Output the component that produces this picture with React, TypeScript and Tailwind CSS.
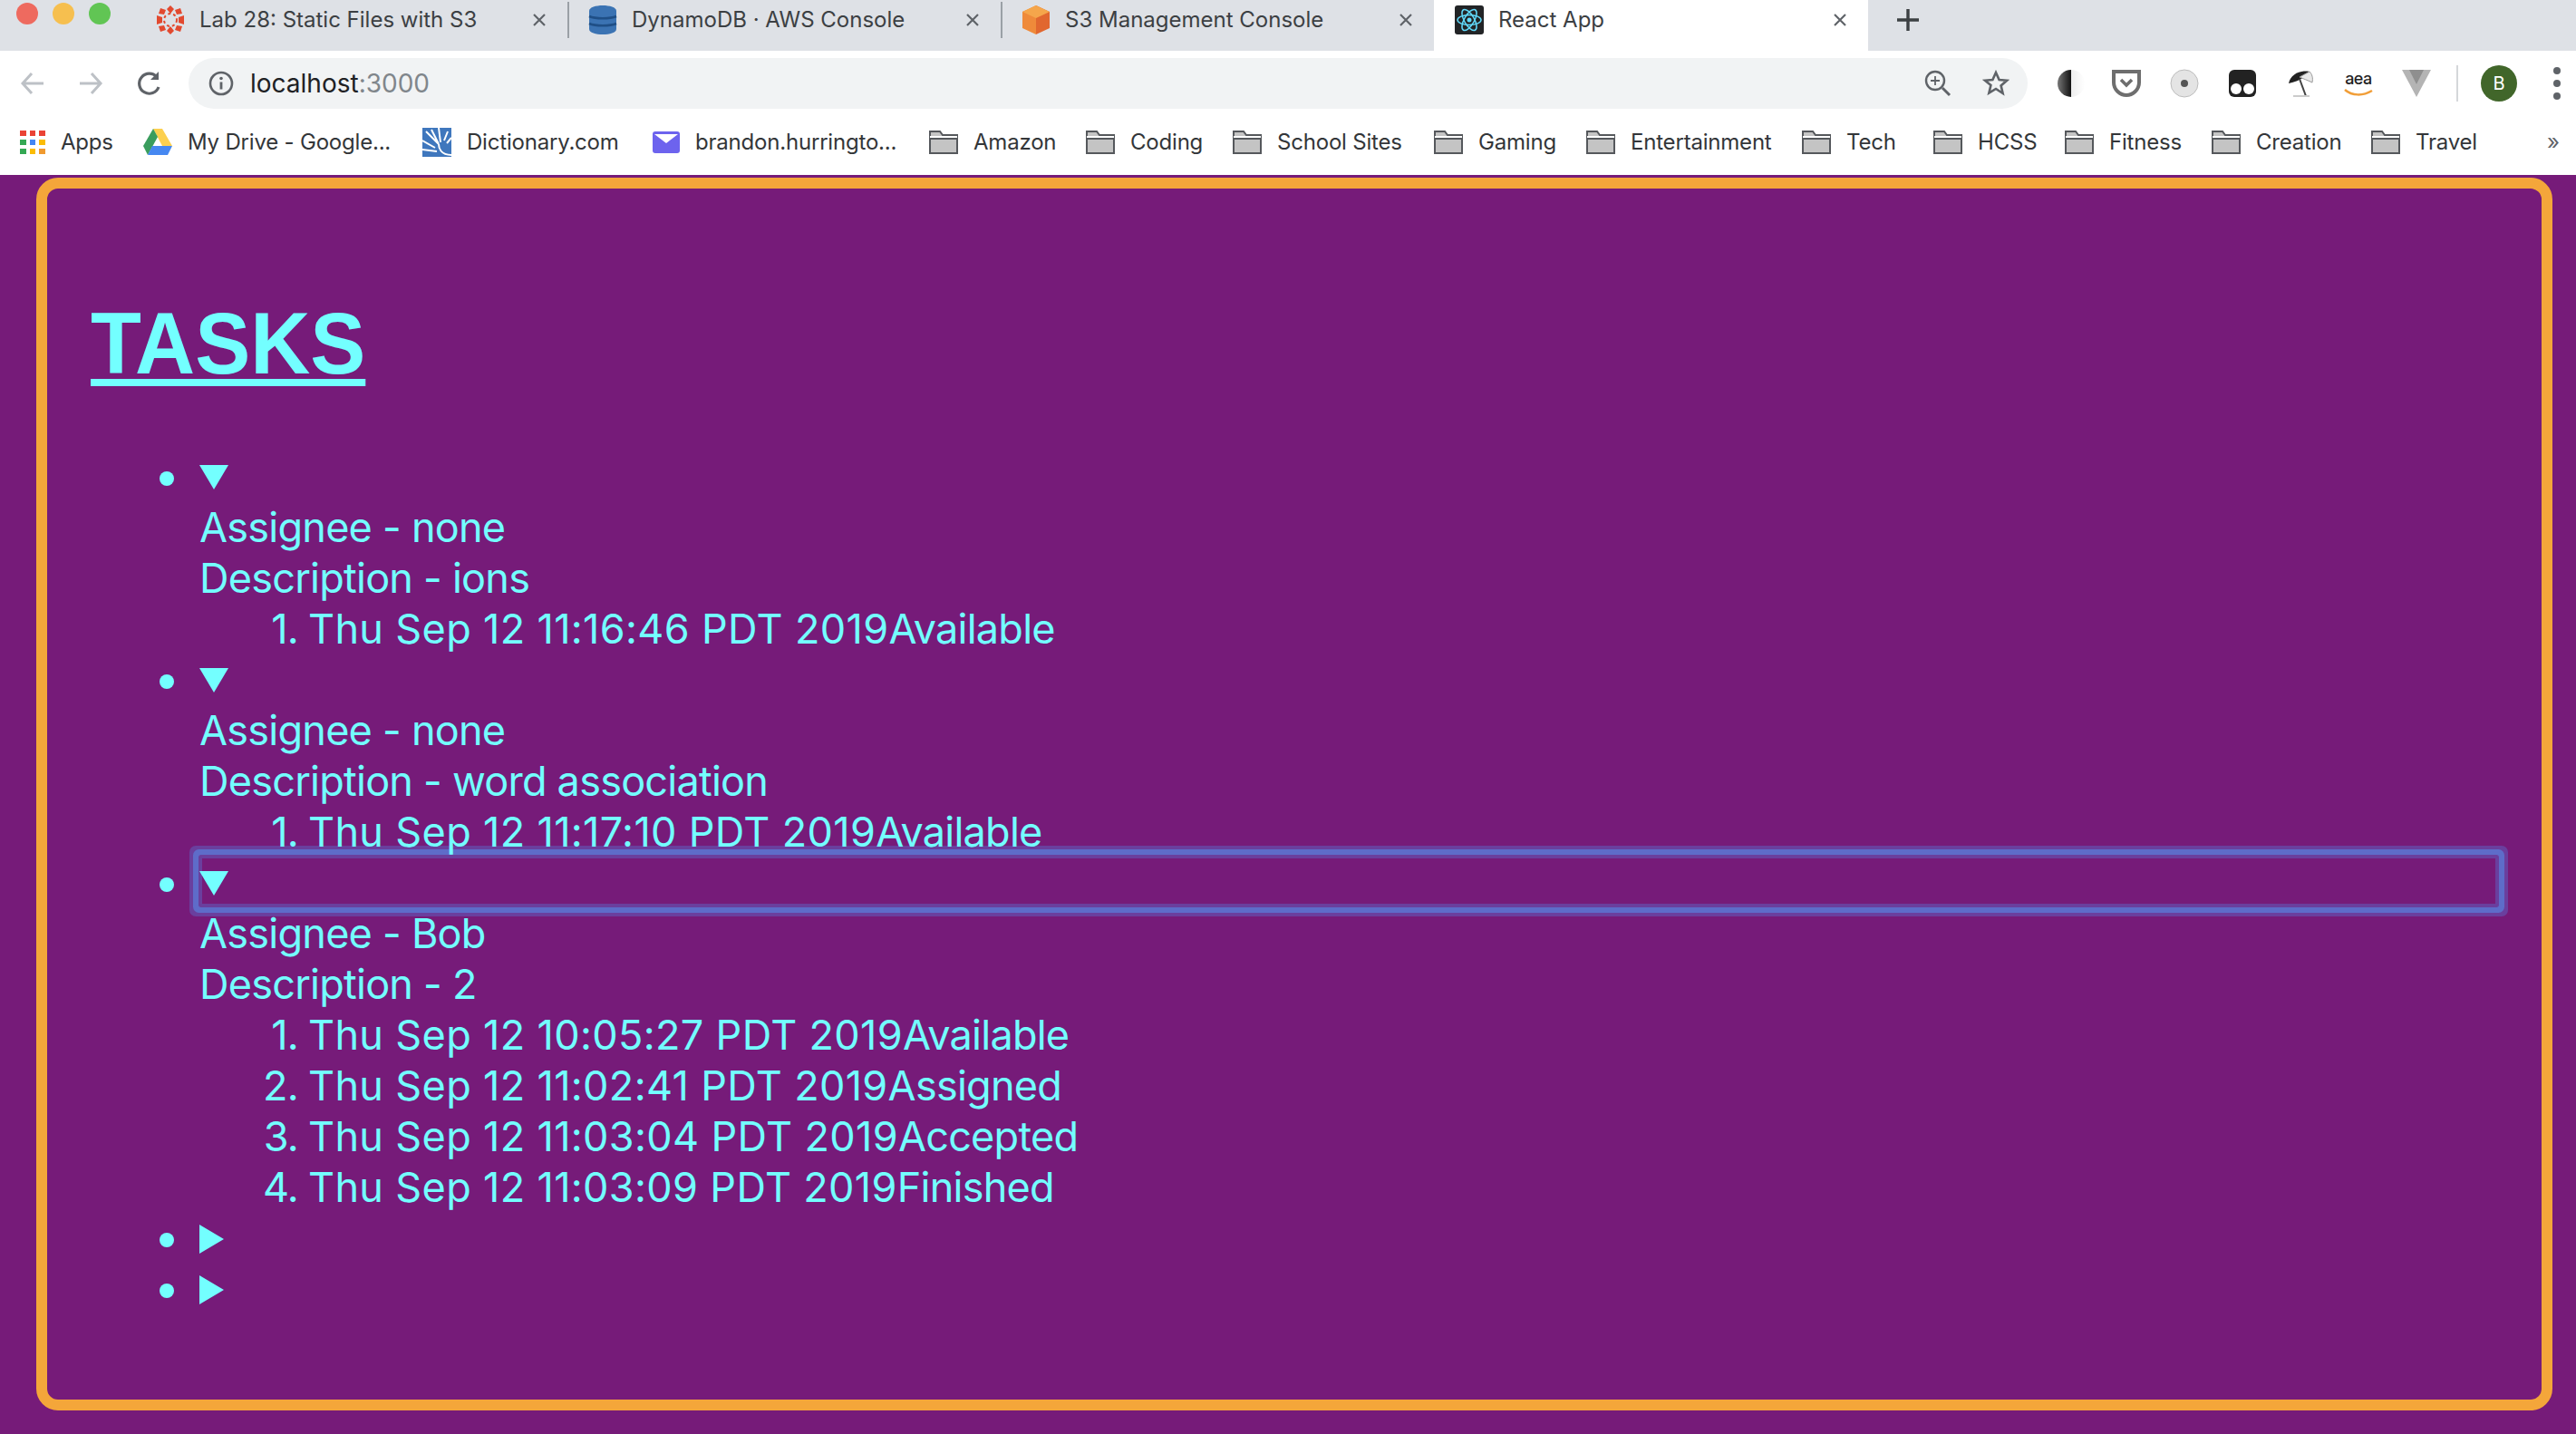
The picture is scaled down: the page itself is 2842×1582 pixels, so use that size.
import type { ReactNode } from "react";

function Close() {
  return (
    <svg width="14" height="14" viewBox="0 0 14 14" className="shrink-0">
      <path d="M1 1l12 12M13 1L1 13" stroke="#5f6368" strokeWidth="2.2" />
    </svg>
  );
}

function CanvasIcon() {
  return (
    <svg width="32" height="32" viewBox="0 0 32 32">
      <circle cx="16" cy="16" r="7" fill="none" stroke="#e2492f" strokeWidth="2" strokeDasharray="3 3" />
      <path d="M16 0l4 4-4 5-4-5zM16 32l4-4-4-5-4 5zM1 11l6 2 0 6-6 2zM31 11l-6 2 0 6 6 2zM5 3l6 2-2 5-6-1zM27 3l-6 2 2 5 6-1zM5 29l6-2-2-5-6 1zM27 29l-6-2 2-5 6 1z" fill="#e2492f" />
    </svg>
  );
}

function DynamoIcon() {
  return (
    <svg width="32" height="32" viewBox="0 0 32 32">
      <path d="M1 6c0-8 30-8 30 0v20c0 8-30 8-30 0z" fill="#3b73b3" />
      <path d="M1 12c7 3 23 3 30 0M1 20c7 3 23 3 30 0" stroke="#1f4f86" strokeWidth="2.5" fill="none" />
    </svg>
  );
}

function BucketIcon() {
  return (
    <svg width="32" height="32" viewBox="0 0 32 32">
      <path d="M16 0l15 7v18l-15 7z" fill="#e1672f" />
      <path d="M16 0L1 7v18l15 7z" fill="#ef8a3a" />
      <path d="M16 0l15 7-15 7L1 7z" fill="#f5a64b" />
    </svg>
  );
}

function ReactIcon() {
  return (
    <svg width="32" height="32" viewBox="0 0 32 32">
      <rect width="32" height="32" rx="3" fill="#222426" />
      <g fill="none" stroke="#61dafb" strokeWidth="1.5">
        <ellipse cx="16" cy="16" rx="13" ry="5.5" />
        <ellipse cx="16" cy="16" rx="13" ry="5.5" transform="rotate(60 16 16)" />
        <ellipse cx="16" cy="16" rx="13" ry="5.5" transform="rotate(120 16 16)" />
      </g>
      <circle cx="16" cy="16" r="2.5" fill="#61dafb" />
    </svg>
  );
}

function Tab({ icon, title, className, active }: { icon: ReactNode; title: string; className: string; active?: boolean }) {
  return (
    <div className={`flex h-full items-center pb-[12px] ${className} ${active ? "bg-white" : ""}`}>
      <span className="flex w-[48px] shrink-0">{icon}</span>
      <span className="flex-1 truncate text-[24px] text-[#3c4043]">{title}</span>
      <Close />
      <span className="w-[24px]" />
    </div>
  );
}

function Sep() {
  return <span className="mb-[12px] h-[40px] w-[2px] shrink-0 bg-[#9aa0a6]" />;
}

function Folder() {
  return (
    <svg width="32" height="26" viewBox="0 0 32 26" className="shrink-0">
      <path d="M1 25V1h11l3 4h16v20z" fill="#c4c4c4" stroke="#55585c" strokeWidth="2" />
      <path d="M1 6h30v3H1z" fill="#fff" />
      <path d="M1 9h30" stroke="#55585c" strokeWidth="2" />
    </svg>
  );
}

function AppsIcon() {
  const colors = ["#ea4335", "#ea4335", "#ea4335", "#34a853", "#4285f4", "#fbbc05", "#34a853", "#fbbc05", "#f09a2f"];
  return (
    <span className="grid h-[26px] w-[28px] shrink-0 grid-cols-3 gap-x-[4px] gap-y-[4px]">
      {colors.map((c, i) => (
        <span key={i} style={{ backgroundColor: c }} />
      ))}
    </span>
  );
}

function DriveIcon() {
  return (
    <svg width="32" height="29" viewBox="0 0 32 29" className="shrink-0">
      <path d="M11 0h10l11 19H21z" fill="#fcd04f" />
      <path d="M11 0l5 9-11 20-5-10z" fill="#3a9d5d" />
      <path d="M10 19h22l-5 10H5z" fill="#4688f1" />
    </svg>
  );
}

function DictIcon() {
  return (
    <svg width="32" height="32" viewBox="0 0 32 32" className="shrink-0">
      <rect width="32" height="32" fill="#3f77bd" />
      <path d="M32 30C20 30 18 22 18 18M18 18L4 4M18 18L10 2M20 16L18 0M14 22L0 14M16 26L0 24M24 14l4-10M27 17l5-6" stroke="#fff" strokeWidth="2" fill="none" />
    </svg>
  );
}

function MailIcon() {
  return (
    <svg width="30" height="24" viewBox="0 0 30 24" className="shrink-0">
      <rect width="30" height="24" rx="3" fill="#6d63ee" />
      <path d="M2 3h26L15 13z" fill="#fff" />
    </svg>
  );
}

function Bookmark({ icon, label, className }: { icon: ReactNode; label: string; className: string }) {
  return (
    <div className={`flex h-full shrink-0 items-center ${className}`}>
      {icon}
      <span className="whitespace-nowrap pl-[17px] text-[24px] tracking-[-0.2px] text-[#333639]">{label}</span>
    </div>
  );
}

function ExtensionIcons() {
  return (
    <div className="flex items-center">
      <span className="flex w-[64px] justify-center">
        <svg width="32" height="32" viewBox="0 0 32 32" className="ml-[5px]">
          <defs>
            <linearGradient id="half" x1="0" x2="1" y1="0" y2="0">
              <stop offset="0" stopColor="#777" />
              <stop offset="0.5" stopColor="#111" />
              <stop offset="0.5" stopColor="#eee" />
              <stop offset="1" stopColor="#fff" />
            </linearGradient>
          </defs>
          <circle cx="16" cy="16" r="15" fill="url(#half)" />
        </svg>
      </span>
      <span className="flex w-[64px] justify-center">
        <svg width="32" height="30" viewBox="0 0 32 30">
          <path d="M2 2h28v12c0 8-7 14-14 14S2 22 2 14z" fill="#fff" stroke="#6e6e6e" strokeWidth="4" />
          <path d="M10 11l6 6 6-6" fill="none" stroke="#6e6e6e" strokeWidth="3.5" />
        </svg>
      </span>
      <span className="flex w-[64px] justify-center">
        <svg width="32" height="32" viewBox="0 0 32 32">
          <circle cx="16" cy="16" r="15" fill="#e4e4e4" stroke="#bdbdbd" />
          <circle cx="16" cy="16" r="4" fill="#555" />
        </svg>
      </span>
      <span className="flex w-[64px] justify-center">
        <svg width="30" height="30" viewBox="0 0 30 30">
          <rect width="30" height="30" rx="6" fill="#222" />
          <circle cx="8" cy="21" r="6" fill="#fff" />
          <circle cx="22" cy="21" r="6" fill="#fff" />
        </svg>
      </span>
      <span className="flex w-[64px] justify-center">
        <svg width="32" height="32" viewBox="0 0 32 32">
          <path d="M3 16C5 6 16 1 26 3 24 8 14 14 3 16z" fill="#222" />
          <path d="M26 3c3 3 4 7 3 12-6-3-10-4-14-6z" fill="#e8e8e8" stroke="#999" />
          <path d="M15 11l7 19" stroke="#444" strokeWidth="2" />
          <path d="M8 30h18" stroke="#ccc" strokeWidth="2" />
        </svg>
      </span>
      <span className="relative flex h-[32px] w-[64px] justify-center">
        <span className="font-['Inter',sans-serif] text-[18px] font-medium leading-[22px] tracking-[-0.5px] text-[#222]">aea</span>
        <svg width="32" height="10" viewBox="0 0 32 10" className="absolute bottom-0 left-[16px]">
          <path d="M1 1c8 7 20 7 30 1" fill="none" stroke="#f19e38" strokeWidth="2.5" />
        </svg>
      </span>
      <span className="flex w-[64px] justify-center">
        <svg width="32" height="30" viewBox="0 0 32 30">
          <path d="M0 0h32L16 30z" fill="#b4b4b4" />
          <path d="M8 0h16L16 16z" fill="#8f8f8f" />
        </svg>
      </span>
    </div>
  );
}

function ChromeBar() {
  return (
    <div className="bg-white font-['Inter',sans-serif]">
      <div className="flex h-[56px] items-center bg-[#dee1e6]">
        <div className="flex w-[172px] shrink-0 items-start gap-[16px] self-start pl-[18px] pt-[3px]">
          <span className="h-[24px] w-[24px] rounded-full bg-[#ee6a5f]" />
          <span className="h-[24px] w-[24px] rounded-full bg-[#f6bf4f]" />
          <span className="h-[24px] w-[24px] rounded-full bg-[#61c554]" />
        </div>
        <Tab icon={<CanvasIcon />} title="Lab 28: Static Files with S3" className="w-[454px]" />
        <Sep />
        <Tab icon={<DynamoIcon />} title="DynamoDB · AWS Console" className="w-[476px] pl-[21px]" />
        <Sep />
        <Tab icon={<BucketIcon />} title="S3 Management Console" className="w-[476px] rounded-br-[20px] pl-[21px]" />
        <Tab icon={<ReactIcon />} title="React App" className="w-[479px] pl-[23px]" active />
        <div className="flex h-full flex-1 items-center rounded-bl-[20px] pb-[12px] pl-[32px]">
          <svg width="24" height="24" viewBox="0 0 24 24">
            <path d="M12 0v24M0 12h24" stroke="#3c4043" strokeWidth="3.4" />
          </svg>
        </div>
      </div>

      <div className="flex h-[64px] items-center pt-[8px]">
        <div className="flex w-[208px] shrink-0 items-center">
          <span className="flex w-[72px] justify-center">
            <svg width="28" height="28" viewBox="0 0 28 28" fill="none" stroke="#bdc1c6" strokeWidth="3">
              <path d="M26 14H3M13 3L3 14l10 11" />
            </svg>
          </span>
          <span className="flex w-[56px] justify-center">
            <svg width="28" height="28" viewBox="0 0 28 28" fill="none" stroke="#bdc1c6" strokeWidth="3">
              <path d="M2 14h23M15 3l10 11-10 11" />
            </svg>
          </span>
          <span className="flex w-[74px] justify-center">
            <svg width="30" height="30" viewBox="0 0 30 30" fill="none" stroke="#5f6368" strokeWidth="3.2">
              <path d="M25 19a11 11 0 1 1-2-11" />
              <path d="M25 2v9h-9z" fill="#5f6368" stroke="none" />
            </svg>
          </span>
        </div>
        <div className="flex h-[56px] w-[2029px] shrink-0 items-center rounded-full bg-[#f1f3f4] pl-[22px] pr-[20px]">
          <svg width="28" height="28" viewBox="0 0 28 28" className="shrink-0">
            <circle cx="14" cy="14" r="12" fill="none" stroke="#5f6368" strokeWidth="2.6" />
            <path d="M14 12.5v8" stroke="#5f6368" strokeWidth="2.8" />
            <circle cx="14" cy="8.5" r="1.8" fill="#5f6368" />
          </svg>
          <span className="ml-[18px] flex-1 text-[28px] text-[#202124]">
            localhost<span className="text-[#80868b]">:3000</span>
          </span>
          <svg width="30" height="30" viewBox="0 0 30 30" fill="none" stroke="#5f6368" strokeWidth="2.4" className="shrink-0">
            <circle cx="12" cy="12" r="10" />
            <path d="M12 7v10M7 12h10" strokeWidth="1.8" />
            <path d="M20 20l8 8" strokeWidth="3" />
          </svg>
          <svg width="30" height="30" viewBox="0 0 30 30" fill="none" stroke="#5f6368" strokeWidth="2.6" className="ml-[34px] shrink-0">
            <path d="M15 3l3.6 8 8.4.8-6.4 5.6 2 8.6L15 21l-7.6 4.6 2-8.6L3 11.8l8.4-.8z" />
          </svg>
        </div>
        <div className="ml-[13px] flex items-center">
          <ExtensionIcons />
          <span className="ml-[12px] h-[40px] w-[2px] bg-[#d5d7da]" />
          <span className="ml-[25px] flex h-[40px] w-[40px] items-center justify-center rounded-full bg-[#41662a] text-[20px] text-white">B</span>
          <span className="ml-[40px] flex flex-col gap-[6px]">
            <span className="h-[8px] w-[8px] rounded-full bg-[#5f6368]" />
            <span className="h-[8px] w-[8px] rounded-full bg-[#5f6368]" />
            <span className="h-[8px] w-[8px] rounded-full bg-[#5f6368]" />
          </span>
        </div>
      </div>

      <div className="flex h-[73px] items-center pl-[22px]">
        <Bookmark icon={<AppsIcon />} label="Apps" className="w-[136px]" />
        <Bookmark icon={<DriveIcon />} label="My Drive - Google..." className="w-[308px]" />
        <Bookmark icon={<DictIcon />} label="Dictionary.com" className="w-[254px]" />
        <Bookmark icon={<MailIcon />} label="brandon.hurringto..." className="w-[305px]" />
        <Bookmark icon={<Folder />} label="Amazon" className="w-[173px]" />
        <Bookmark icon={<Folder />} label="Coding" className="w-[162px]" />
        <Bookmark icon={<Folder />} label="School Sites" className="w-[222px]" />
        <Bookmark icon={<Folder />} label="Gaming" className="w-[168px]" />
        <Bookmark icon={<Folder />} label="Entertainment" className="w-[238px]" />
        <Bookmark icon={<Folder />} label="Tech" className="w-[145px]" />
        <Bookmark icon={<Folder />} label="HCSS" className="w-[145px]" />
        <Bookmark icon={<Folder />} label="Fitness" className="w-[162px]" />
        <Bookmark icon={<Folder />} label="Creation" className="w-[176px]" />
        <Bookmark icon={<Folder />} label="Travel" className="w-[194px]" />
        <span className="text-[24px] text-[#5f6368]">»</span>
      </div>
    </div>
  );
}

function Bullet() {
  return <span className="mt-[24px] h-[16px] w-[16px] shrink-0 rounded-full bg-[#73ffff]" />;
}

type TaskEvent = { time: string; status: string };

function Task({ assignee, description, events }: { assignee?: string; description?: string; events?: TaskEvent[] }) {
  return (
    <li className="flex gap-[28px]">
      <Bullet />
      {events ? (
        <div className="flex-1">
          <div className={`flex h-[56px] items-center ${assignee === "Bob" ? "rounded-[2px] shadow-[inset_0_0_0_3px_#6a3f9e,0_0_0_1px_#6a3f9e,0_0_0_7px_#5e6cc9,0_0_0_11px_#6a3f9e]" : ""}`}>
            <svg width="32" height="27" viewBox="0 0 32 27" className="mt-[5px]">
              <path d="M0 0h32L16 27z" fill="#73ffff" />
            </svg>
          </div>
          <div className="translate-y-[2px]">
            <div>Assignee - {assignee}</div>
            <div>Description - {description}</div>
            <ol>
              {events.map((e, i) => (
                <li key={e.time} className="flex">
                  <span className="w-[109px] shrink-0 text-right">{i + 1}.</span>
                  <span className="pl-[11px]">
                    <span className="tracking-[0.35px]">{e.time}</span>
                    {e.status}
                  </span>
                </li>
              ))}
            </ol>
          </div>
        </div>
      ) : (
        <div className="flex h-[56px] flex-1 items-center">
          <svg width="27" height="32" viewBox="0 0 27 32" className="mt-[6px]">
            <path d="M0 0l27 16L0 32z" fill="#73ffff" />
          </svg>
        </div>
      )}
    </li>
  );
}

export default function App() {
  return (
    <div className="h-[1582px] overflow-hidden bg-[#761b79]">
      <ChromeBar />
      <main className="ml-[40px] mt-[3px] h-[1360px] w-[2776px] rounded-[24px] border-[12px] border-[#f4a63a] px-[48px] font-['Inter',sans-serif] text-[45px] leading-[56px] tracking-[-0.75px] text-[#73ffff]">
        <h1 className="pt-[115px] font-['Liberation_Sans',sans-serif] text-[96px] font-bold leading-[112px] tracking-normal">
          <span className="inline-block origin-left scale-x-[0.953] underline decoration-[8px] underline-offset-[6px] [text-decoration-skip-ink:none]">TASKS</span>
        </h1>
        <ul className="mt-[61px] pl-[76px]">
          <Task assignee="none" description="ions" events={[{ time: "Thu Sep 12 11:16:46 PDT 2019", status: "Available" }]} />
          <Task assignee="none" description="word association" events={[{ time: "Thu Sep 12 11:17:10 PDT 2019", status: "Available" }]} />
          <Task
            assignee="Bob"
            description="2"
            events={[
              { time: "Thu Sep 12 10:05:27 PDT 2019", status: "Available" },
              { time: "Thu Sep 12 11:02:41 PDT 2019", status: "Assigned" },
              { time: "Thu Sep 12 11:03:04 PDT 2019", status: "Accepted" },
              { time: "Thu Sep 12 11:03:09 PDT 2019", status: "Finished" },
            ]}
          />
          <Task />
          <Task />
        </ul>
      </main>
    </div>
  );
}
